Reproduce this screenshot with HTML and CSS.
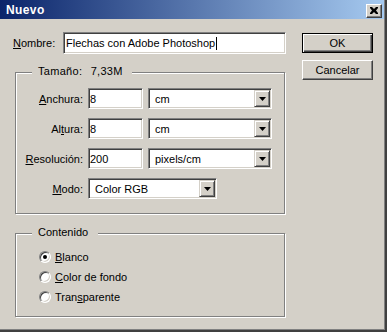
FILE: index.html
```html
<!DOCTYPE html>
<html lang="es">
<head>
  <meta charset="UTF-8">
  <title>Nuevo</title>
  <link rel="stylesheet" href="styles.css">
</head>
<body>
  <div class="window">
    <div class="titlebar">
      <span class="title">Nuevo</span>
      <span class="close-btn">
        <svg width="8" height="7" viewBox="0 0 8 7"><path d="M0 0h2l2 2 2-2h2v1L6 3.5 8 6v1H6L4 5 2 7H0V6l2-2.5L0 1z" fill="#000"/></svg>
      </span>
    </div>

    <div class="content">
      <div class="left">
        <div class="name-row">
          <label class="name-label"><u>N</u>ombre:</label>
          <div class="field name-field">Flechas con Adobe Photoshop<span class="caret"></span></div>
        </div>

        <div class="group size-group">
          <span class="legend">Tamaño: <span class="size-value">7,33M</span></span>
          <div class="form-grid">
            <label class="row-label"><u>A</u>nchura:</label>
            <div class="field">8</div>
            <div class="field select"><span>cm</span><span class="drop"><svg width="7" height="4" viewBox="0 0 7 4"><path d="M0 0h7L3.5 4z" fill="#000"/></svg></span></div>

            <label class="row-label">Al<u>t</u>ura:</label>
            <div class="field">8</div>
            <div class="field select"><span>cm</span><span class="drop"><svg width="7" height="4" viewBox="0 0 7 4"><path d="M0 0h7L3.5 4z" fill="#000"/></svg></span></div>

            <label class="row-label"><u>R</u>esolución:</label>
            <div class="field">200</div>
            <div class="field select"><span>pixels/cm</span><span class="drop"><svg width="7" height="4" viewBox="0 0 7 4"><path d="M0 0h7L3.5 4z" fill="#000"/></svg></span></div>

            <label class="row-label"><u>M</u>odo:</label>
            <div class="field select mode-select"><span>Color RGB</span><span class="drop"><svg width="7" height="4" viewBox="0 0 7 4"><path d="M0 0h7L3.5 4z" fill="#000"/></svg></span></div>
          </div>
        </div>

        <div class="group content-group">
          <span class="legend">Contenido</span>
          <div class="radio-list">
            <div class="radio-row"><span class="radio checked"></span><span><u>B</u>lanco</span></div>
            <div class="radio-row"><span class="radio"></span><span><u>C</u>olor de fondo</span></div>
            <div class="radio-row"><span class="radio"></span><span>Tran<u>s</u>parente</span></div>
          </div>
        </div>
      </div>

      <div class="buttons">
        <button class="btn default">OK</button>
        <button class="btn">Cancelar</button>
      </div>
    </div>
  </div>
</body>
</html>
```

FILE: styles.css
```css
* {
  box-sizing: border-box;
}

body {
  margin: 0;
  font-family: "Liberation Sans", Arial, sans-serif;
  font-size: 11px;
  color: #000;
  background: #d4d0c8;
}

.window {
  width: 387px;
  height: 332px;
  background: #d4d0c8;
  border-right: 2px solid #404040;
  border-bottom: 2px solid #404040;
  box-shadow: inset -1px -1px 0 #808080;
}

.titlebar {
  display: flex;
  justify-content: space-between;
  align-items: center;
  height: 19px;
  margin-right: 1px;
  padding: 0 2px 0 6px;
  background: linear-gradient(to right, #0a246a, #a6caf0);
  color: #fff;
  font-weight: bold;
}

.title {
  font-size: 12px;
  letter-spacing: 0.4px;
}

.close-btn {
  display: flex;
  justify-content: center;
  align-items: center;
  width: 16px;
  height: 14px;
  margin-top: 2px;
  background: #d4d0c8;
  border: 1px solid;
  border-color: #fff #404040 #404040 #fff;
  box-shadow: inset -1px -1px 0 #808080;
}

.content {
  display: flex;
  padding: 13px 0 0 13px;
}

.left {
  width: 273px;
}

.name-row {
  display: flex;
  align-items: center;
  height: 22px;
}

.name-label {
  width: 50px;
}

.field {
  display: flex;
  align-items: center;
  height: 21px;
  padding: 0 1px;
  background: #fff;
  border: 1px solid;
  border-color: #808080 #fff #fff #808080;
  box-shadow: inset 1px 1px 0 #404040, inset -1px -1px 0 #d4d0c8;
  white-space: nowrap;
}

.name-field {
  width: 223px;
  height: 22px;
  padding-left: 2px;
}

.caret {
  display: inline-block;
  width: 1px;
  height: 13px;
  margin-left: 1px;
  background: #000;
}

.group {
  position: relative;
  border: 1px solid #808080;
  box-shadow: inset 1px 1px 0 #fff, 1px 1px 0 #fff;
}

.legend {
  position: absolute;
  top: -8px;
  left: 16px;
  padding: 0 9px 0 6px;
  line-height: 13px;
  background: #d4d0c8;
}

.size-value {
  margin-left: 5px;
}

.size-group {
  width: 270px;
  height: 142px;
  margin: 18px 0 0 2px;
  padding-top: 15px;
}

.size-group .legend {
  letter-spacing: 0.3px;
}

.form-grid {
  display: grid;
  grid-template-columns: 67px 55px 124px;
  grid-auto-rows: 21px;
  column-gap: 5px;
  row-gap: 9px;
  align-items: center;
}

.row-label {
  text-align: right;
}

.select {
  padding: 0 0 0 6px;
  justify-content: space-between;
}

.mode-select {
  grid-column: 2 / span 2;
  width: 129px;
}

.drop {
  display: flex;
  justify-content: center;
  align-items: center;
  width: 16px;
  height: 17px;
  margin: 1px;
  background: #d4d0c8;
  border: 1px solid;
  border-color: #d4d0c8 #404040 #404040 #d4d0c8;
  box-shadow: inset 1px 1px 0 #fff, inset -1px -1px 0 #808080;
}

.content-group {
  width: 270px;
  height: 84px;
  margin: 19px 0 0 2px;
  padding: 13px 0 0 23px;
}

.content-group .legend {
  padding-right: 10px;
}

.radio-list {
  display: flex;
  flex-direction: column;
}

.radio-row {
  display: flex;
  align-items: center;
  gap: 4px;
  height: 20px;
}

.radio {
  position: relative;
  width: 12px;
  height: 12px;
  border-radius: 50%;
  background: #fff;
  border: 1px solid;
  border-color: #808080 #fff #fff #808080;
  box-shadow: inset 1px 1px 0 #404040, inset -1px -1px 0 #d4d0c8;
}

.radio.checked::after {
  content: "";
  position: absolute;
  left: 3px;
  top: 3px;
  width: 4px;
  height: 4px;
  border-radius: 50%;
  background: #000;
}

.buttons {
  display: flex;
  flex-direction: column;
  gap: 7px;
  margin-left: 16px;
  padding-top: 1px;
}

.btn {
  width: 71px;
  height: 20px;
  padding: 0;
  font-family: inherit;
  font-size: 11px;
  color: #000;
  background: #d4d0c8;
  border: 1px solid;
  border-color: #fff #404040 #404040 #fff;
  box-shadow: inset -1px -1px 0 #808080;
}

.btn.default {
  border-color: #000;
  box-shadow: inset 1px 1px 0 #fff, inset -1px -1px 0 #404040, inset -2px -2px 0 #808080;
}
```
